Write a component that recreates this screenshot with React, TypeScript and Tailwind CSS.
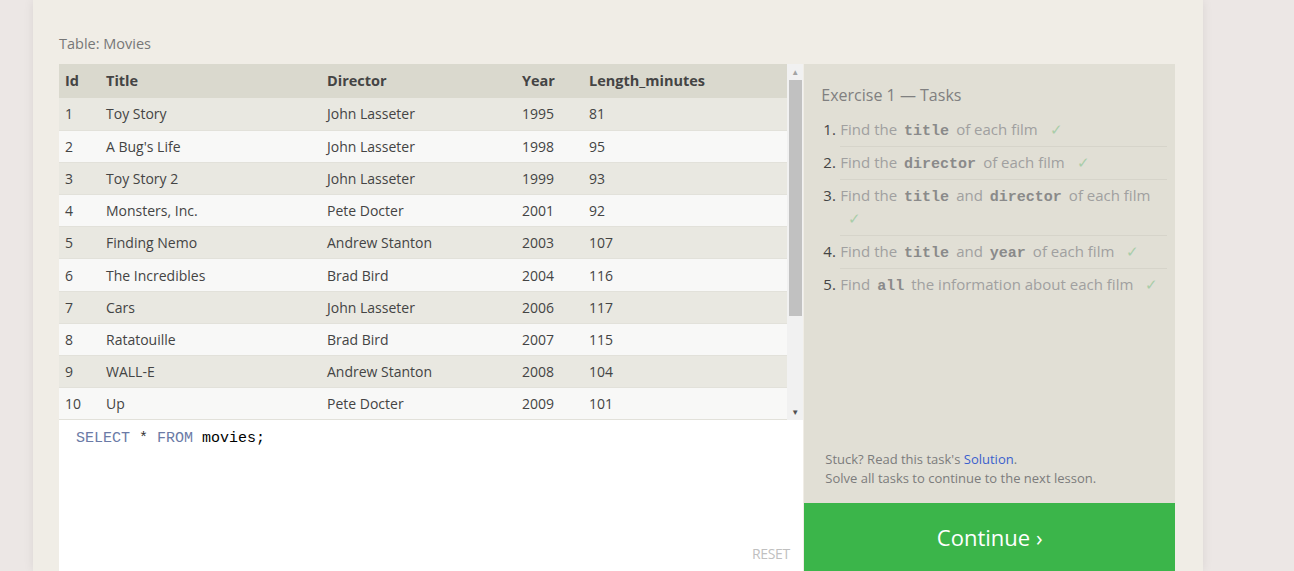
import React from 'react';

const movies = [
  [1, 'Toy Story', 'John Lasseter', 1995, 81],
  [2, "A Bug's Life", 'John Lasseter', 1998, 95],
  [3, 'Toy Story 2', 'John Lasseter', 1999, 93],
  [4, 'Monsters, Inc.', 'Pete Docter', 2001, 92],
  [5, 'Finding Nemo', 'Andrew Stanton', 2003, 107],
  [6, 'The Incredibles', 'Brad Bird', 2004, 116],
  [7, 'Cars', 'John Lasseter', 2006, 117],
  [8, 'Ratatouille', 'Brad Bird', 2007, 115],
  [9, 'WALL-E', 'Andrew Stanton', 2008, 104],
  [10, 'Up', 'Pete Docter', 2009, 101],
] as const;

const Code = ({ children }: { children: React.ReactNode }) => (
  <code className="font-['Liberation_Mono',monospace] font-bold text-[#8a8a8a] mx-[7px] leading-none">{children}</code>
);

const Check = () => <span className="ml-2 text-[#a9cda9]">✓</span>;

const tasks: React.ReactNode[] = [
  <>Find the<Code>title</Code>of each film <Check /></>,
  <>Find the<Code>director</Code>of each film <Check /></>,
  <>Find the<Code>title</Code>and<Code>director</Code>of each film <Check /></>,
  <>Find the<Code>title</Code>and<Code>year</Code>of each film <Check /></>,
  <>Find<Code>all</Code>the information about each film <Check /></>,
];

export default function App() {
  return (
    <div className="h-[571px] w-[1294px] overflow-hidden bg-[#ece7e5] font-['Open_Sans',sans-serif] flex">
      <div className="w-[33px] shrink-0" />
      <div className="w-[1170px] shrink-0 bg-[#f0ede6] shadow-[0_0_10px_rgba(0,0,0,0.08)] flex flex-col">
        <div className="h-[5px] bg-[#f8f6f3]" />
        <div className="pl-[26px] pt-[33px] pr-[28px]">
          <div className="text-[14.5px] text-[#777] leading-[22px] mb-[9px]">Table: Movies</div>
          <div className="flex">
            <div className="w-[745px] flex flex-col">
              <div className="flex h-[356px]">
                <div className="flex-1 overflow-hidden">
                  <table className="w-full text-[14px] text-[#444] border-collapse">
                    <thead>
                      <tr className="bg-[#dad9ce] h-[34px] text-left text-[14.5px]">
                        <th className="pl-[6px] w-[47px] font-bold">Id</th>
                        <th className="w-[221px] font-bold">Title</th>
                        <th className="w-[195px] font-bold">Director</th>
                        <th className="w-[67px] font-bold">Year</th>
                        <th className="font-bold">Length_minutes</th>
                      </tr>
                    </thead>
                    <tbody>
                      {movies.map((m, i) => (
                        <tr
                          key={m[0]}
                          className={`h-[32.2px] border-b border-[#e2e1da] ${i % 2 === 0 ? 'bg-[#e9e8e1]' : 'bg-[#f8f8f7]'}`}
                        >
                          <td className="pl-[6px]">{m[0]}</td>
                          <td>{m[1]}</td>
                          <td>{m[2]}</td>
                          <td>{m[3]}</td>
                          <td>{m[4]}</td>
                        </tr>
                      ))}
                    </tbody>
                  </table>
                </div>
                <div className="w-[16px] bg-[#f1f1f1] flex flex-col items-center">
                  <div className="h-[16px] flex items-center justify-center text-[#a3a3a3] text-[8px]">▲</div>
                  <div className="w-[13px] h-[236px] bg-[#c1c1c1]" />
                  <div className="flex-1" />
                  <div className="h-[16px] flex items-center justify-center text-[#505050] text-[8px]">▼</div>
                </div>
              </div>
              <div className="bg-white h-[200px] relative pl-[17px] pt-[9px]">
                <div className="font-['Liberation_Mono',monospace] text-[15px] leading-[20px]">
                  <span className="text-[#6b7aa6]">SELECT</span>
                  <span className="text-[#333]"> * </span>
                  <span className="text-[#6b7aa6]">FROM</span>
                  <span className="text-black"> movies;</span>
                </div>
                <div className="absolute left-[693px] top-[123px] text-[14px] text-[#c0c0c0] tracking-tight">RESET</div>
              </div>
            </div>
            <div className="w-[371px] ml-[1px] flex flex-col">
              <div className="h-[439px] bg-[#e1dfd5] pl-[17px] pr-[8px] pt-[19px] flex flex-col">
                <div className="text-[16px] text-[#808080] leading-[24px] mb-[7px]">Exercise 1 — Tasks</div>
                <ol className="text-[15px] text-[#a0a0a0] leading-[23px]">
                  {tasks.map((t, i) => (
                    <li key={i} className="flex pl-[2px]">
                      <span className="text-[#444] w-[17px] shrink-0 pt-[4px]">{i + 1}.</span>
                      <div className={`flex-1 pt-[4px] pb-[5px] ${i < 4 ? 'border-b border-[#d6d4ca]' : ''}`}>
                        {t}
                      </div>
                    </li>
                  ))}
                </ol>
                <div className="flex-1" />
                <div className="text-[13px] text-[#7c7c7c] leading-[19px] pl-[4px] pb-[15px]">
                  <div>
                    Stuck? Read this task's <span className="text-[#3a5fcd]">Solution</span>.
                  </div>
                  <div>Solve all tasks to continue to the next lesson.</div>
                </div>
              </div>
              <div className="h-[80px] bg-[#3bb54a] text-white text-[22px] flex justify-center pt-[18px]">
                Continue ›
              </div>
            </div>
          </div>
        </div>
      </div>
    </div>
  );
}
